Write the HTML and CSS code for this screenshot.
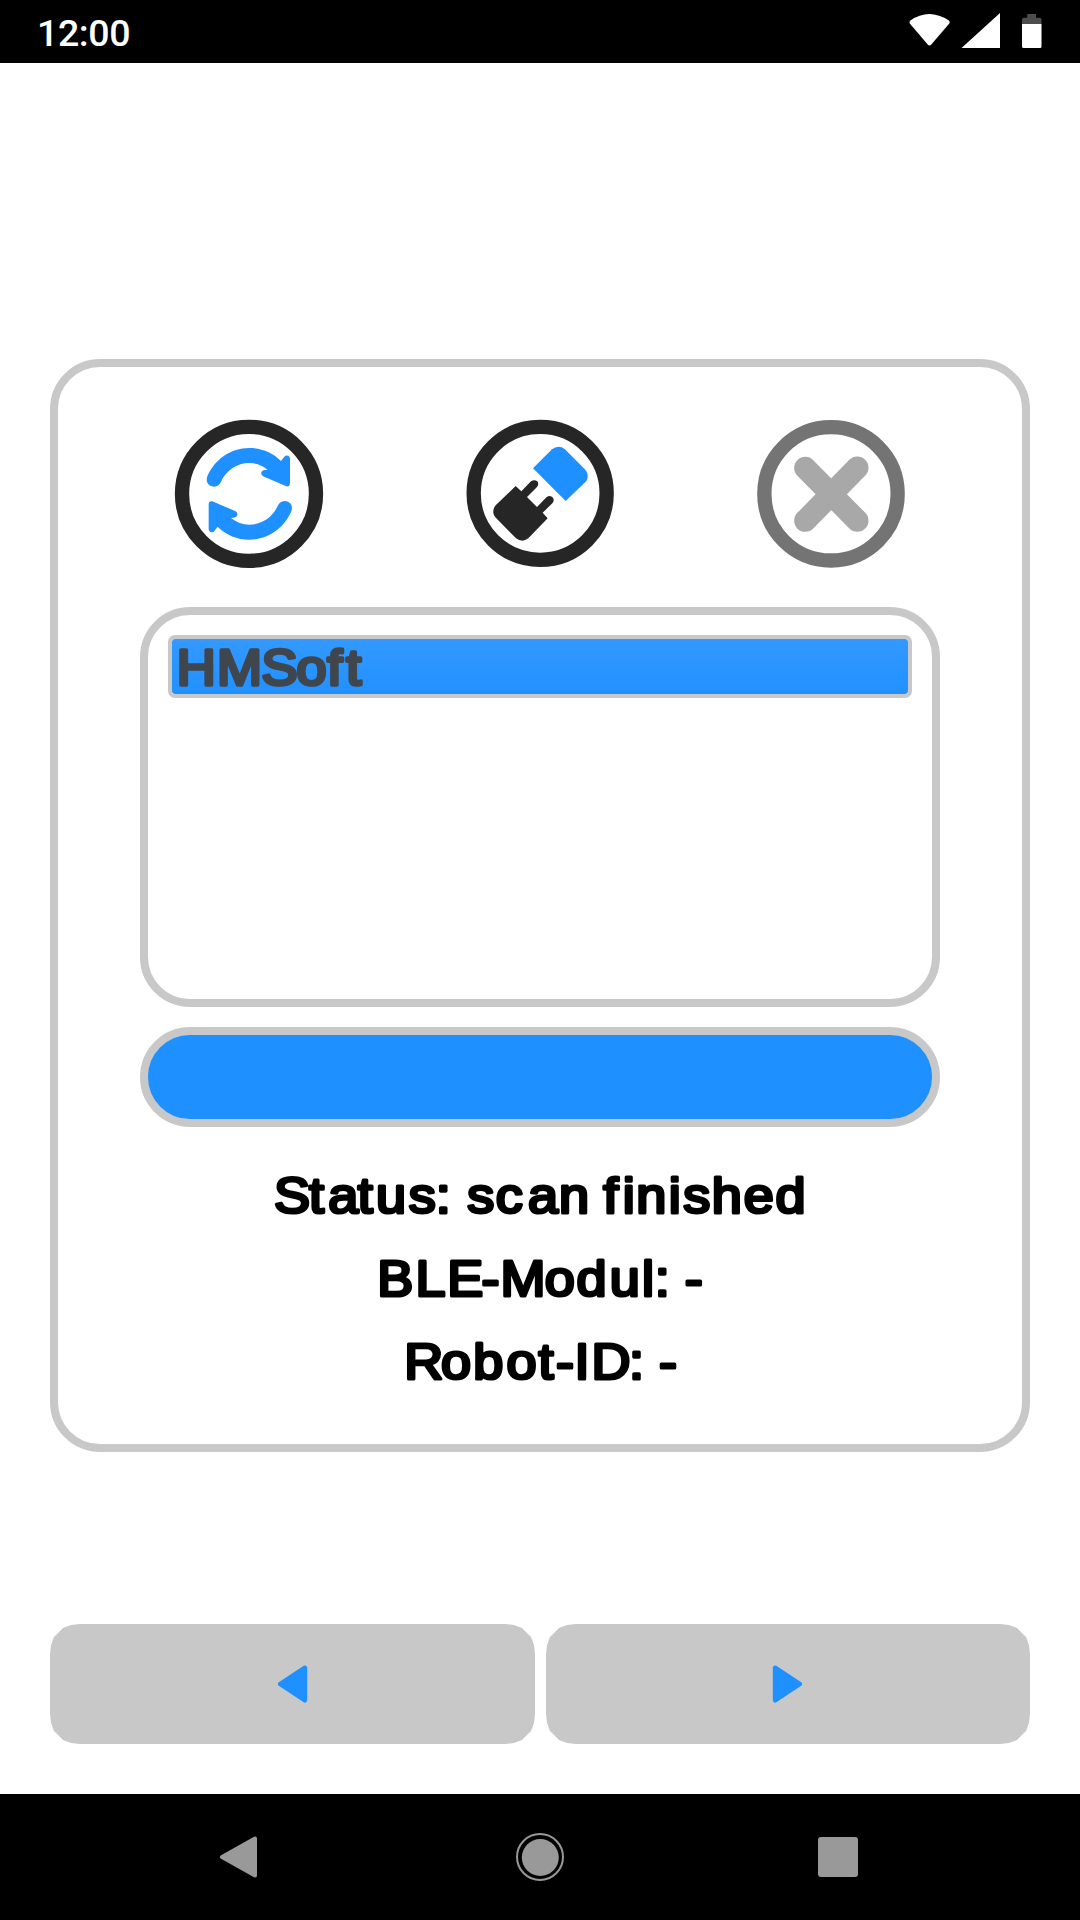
FILE: index.html
```html
<!DOCTYPE html>
<html lang="en">
<head>
<meta charset="utf-8">
<title>Bluetooth</title>
<link rel="stylesheet" href="styles.css">
</head>
<body>
<header class="status-bar">
  <span class="clock">12:00</span>
  <svg class="status-icons" viewBox="0 0 140 63" width="140" height="63">
    <path fill="#fff" d="M10.300 20.500Q29 7.500 48.900 20.500Q50.500 22 49.300 23.500L31.300 44.500Q29.500 46.300 27.700 44.500L9.800 23.500Q8.800 22 10.300 20.500Z"/>
    <path fill="#fff" d="M100 13V48H61.500Z"/>
    <path fill="#4d4d4d" d="M127.200 14H136V17.700H139.500Q141.500 17.700 141.500 19.700V24H122V19.700Q122 17.700 124 17.700H127.200Z"/>
    <path fill="#fff" d="M122 24H141.500V46.500Q141.500 48 140 48H123.500Q122 48 122 46.500Z"/>
  </svg>
</header>
<main class="screen">
  <section class="card">
    <div class="actions">
      <svg class="action" viewBox="0 0 540 540">
        <circle cx="267" cy="266.500" r="201" fill="none" stroke="#262626" stroke-width="43"/>
        <path id="arrow" fill="#1e90ff" d="M142 214C164 163 212 129 268 129C304 129 338 143 363 168L373 155Q379 149 386 153Q390 156 390 161V237Q389 246 379 244L309 214Q302 209 304 202Q307 195 315 195L323 194C307 181 288 174 268 174C231 174 199 196 183 230Q177 243 163 245Q147 245 141 231Q139 222 142 214Z"/>
        <use href="#arrow" transform="rotate(180 268 266.500)"/>
      </svg>
      <svg class="action" viewBox="0 0 540 540">
        <circle cx="270.500" cy="265" r="199.500" fill="none" stroke="#262626" stroke-width="43"/>
        <path fill="#1e90ff" d="M249 190L306 133Q325 118 344 132L406 194Q414 203 413 218Q412 225 407 230L347 288Z"/>
        <path fill="#262626" d="M197 243L137 301Q129 309 130 323Q131 331 136 337L198 400Q207 407 218 407Q228 406 235 400L293 340L278 323L307 295Q314 287 309 278Q301 269 290 276L261 306L231 276L261 246Q268 238 262 229Q253 222 243 229L214 259Z"/>
      </svg>
      <svg class="action" viewBox="0 0 540 540">
        <circle cx="273" cy="266.500" r="200" fill="none" stroke="#747474" stroke-width="43"/>
        <path fill="none" stroke="#a8a8a8" stroke-width="67" stroke-linecap="round" d="M196 189L352 347M352 188L196 347"/>
      </svg>
    </div>
    <div class="devices">
      <div class="device">
        <svg class="rounded" width="200" height="55"><text y="46" x="4.500 42.100 83.600 116.400 145.100 162.900">HMSoft</text></svg>
      </div>
    </div>
    <div class="progress"></div>
    <div class="info">
      <svg class="rounded" width="640" height="83"><text y="61.500" x="50.500 83.100 101.200 128.800 145.800 176.500 201.700 216.800 231 257.800 287.900 316.800 345.800 358.100 376.300 389.100 419.500 432.900 459.500 489.500 519.200">Status: scan finished</text></svg>
      <svg class="rounded" width="640" height="83"><text y="61.500" x="147 182.700 212.500 244.500 262.100 303.500 333.200 364.300 394.400 406.200 420.600 434.400">BLE-Modul: -</text></svg>
      <svg class="rounded" width="640" height="83"><text y="61.500" x="172.200 206.600 236.700 267.800 297.700 314 331.400 347.200 382.300 397 410.400">Robot-ID: -</text></svg>
    </div>
  </section>
  <div class="pager">
    <div class="page-button prev">
      <svg width="485" height="120"><path d="M254.700 44L230.500 60L254.700 76Z"/></svg>
    </div>
    <div class="page-button next">
      <svg width="484" height="120"><path d="M229.300 44L253.500 60L229.300 76Z"/></svg>
    </div>
  </div>
</main>
<footer class="system-nav">
  <svg viewBox="0 0 1080 126" width="1080" height="126" fill="#999">
    <path stroke="#999" stroke-width="4" stroke-linejoin="round" d="M255 44.500V81.500L222 63Z"/>
    <circle cx="540" cy="63" r="23" fill="none" stroke="#999" stroke-width="2"/>
    <circle cx="540.300" cy="63.500" r="18.500"/>
    <rect x="818" y="43" width="40" height="40" rx="3"/>
  </svg>
</footer>
</body>
</html>
```
FILE: styles.css
```css
* { box-sizing: border-box; }
body {
  margin: 0;
  width: 1080px;
  height: 1920px;
  display: flex;
  flex-direction: column;
  background: #fff;
  overflow: hidden;
}
svg { display: block; overflow: visible; flex: none; }
.status-bar {
  height: 63px;
  background: #000;
  display: flex;
  align-items: center;
  justify-content: space-between;
  padding: 0 40px 0 37px;
}
.clock {
  color: #fff;
  font: 500 37.500px/44px Roboto, sans-serif;
  letter-spacing: -0.400px;
  padding-top: 3px;
}
.screen {
  flex: 1;
  padding: 296px 50px 50px;
  display: flex;
  flex-direction: column;
  justify-content: space-between;
}
.card {
  height: 1093px;
  border: 8px solid #c8c8c8;
  border-radius: 50px;
  padding: 38px 82px 0;
}
.actions {
  display: flex;
  justify-content: center;
  gap: 110px;
}
.action { width: 180px; height: 180px; }
.devices {
  height: 400px;
  margin-top: 22px;
  border: 8px solid #c8c8c8;
  border-radius: 50px;
  padding: 20px;
}
.device {
  height: 63px;
  border: 4px solid #c8c8c8;
  border-radius: 7px;
  background: linear-gradient(#3399ff, #2190ff) padding-box;
}
.progress {
  height: 100px;
  margin-top: 20px;
  border: 8px solid #c8c8c8;
  border-radius: 50px;
  background: #1e90ff;
}
.info {
  margin-top: 25px;
  display: flex;
  flex-direction: column;
  align-items: center;
}
.rounded text {
  font: 400 50.500px "Liberation Sans", Arial, sans-serif;
  fill: #000;
  stroke: #000;
  stroke-width: 3.200px;
  stroke-linejoin: round;
  transform: scaleX(1.070);
}
.device .rounded text {
  fill: #3f464d;
  stroke: #3f464d;
  stroke-width: 3.600px;
}
.pager { display: flex; gap: 11px; }
.page-button {
  height: 120px;
  background: #c8c8c8;
  clip-path: polygon(
    0 30px, 1px 21px, 4px 13px, 13px 4px, 21px 1px, 30px 0,
    calc(100% - 30px) 0, calc(100% - 21px) 1px, calc(100% - 13px) 4px,
    calc(100% - 4px) 13px, calc(100% - 1px) 21px, 100% 30px,
    100% calc(100% - 30px), calc(100% - 1px) calc(100% - 21px),
    calc(100% - 4px) calc(100% - 13px), calc(100% - 13px) calc(100% - 4px),
    calc(100% - 21px) calc(100% - 1px), calc(100% - 30px) 100%,
    30px 100%, 21px calc(100% - 1px), 13px calc(100% - 4px),
    4px calc(100% - 13px), 1px calc(100% - 21px), 0 calc(100% - 30px));
}
.prev { width: 485px; }
.next { width: 484px; }
.page-button path {
  fill: #1e90ff;
  stroke: #1e90ff;
  stroke-width: 5px;
  stroke-linejoin: round;
}
.system-nav { height: 126px; background: #000; }
```
